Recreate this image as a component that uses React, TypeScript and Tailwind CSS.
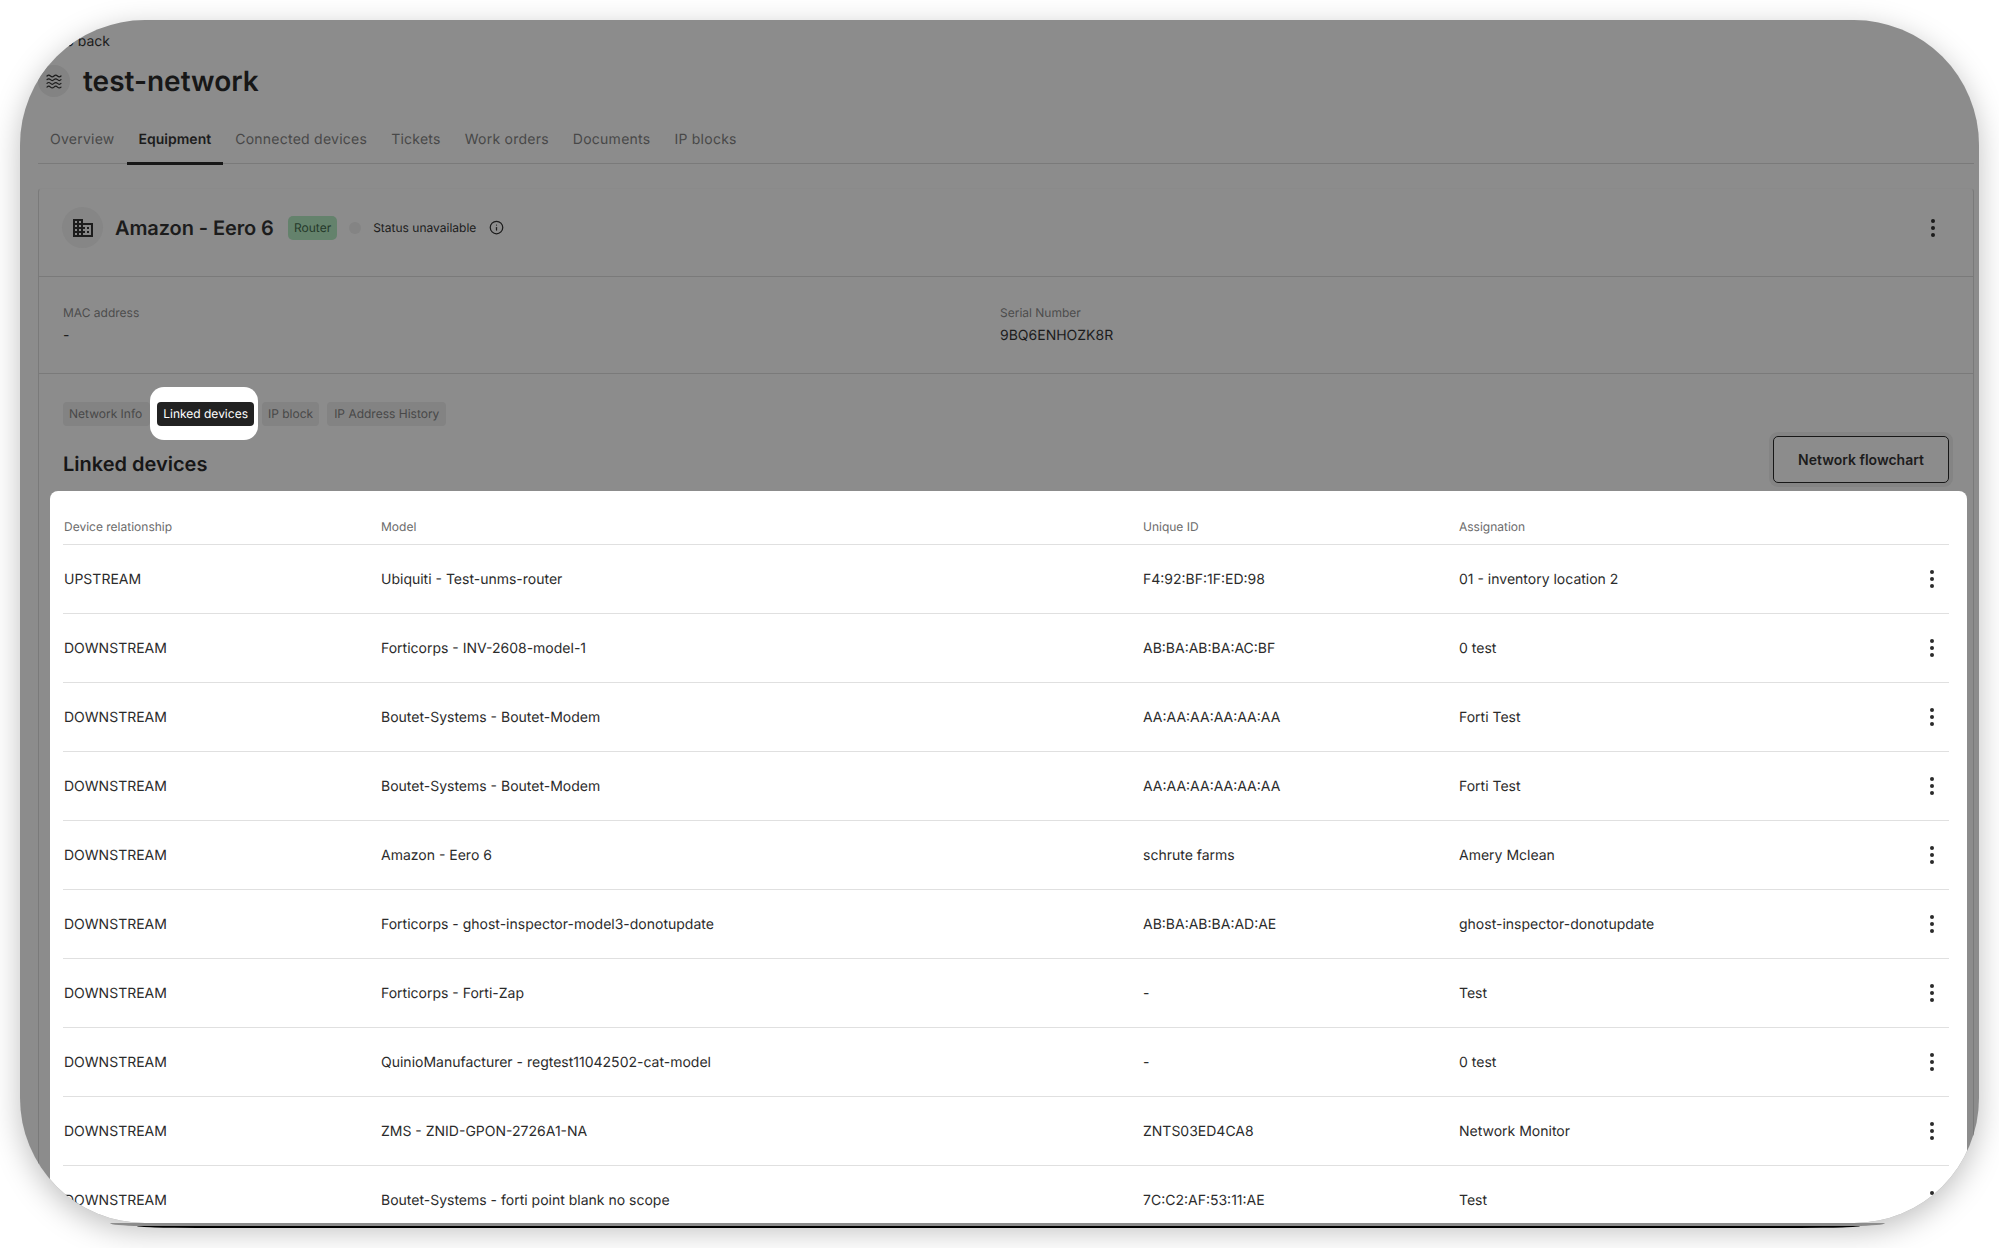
import { Info } from "lucide-react";
import { MdDomain } from "react-icons/md";

const rows = [
  ["UPSTREAM", "Ubiquiti - Test-unms-router", "F4:92:BF:1F:ED:98", "01 - inventory location 2"],
  ["DOWNSTREAM", "Forticorps - INV-2608-model-1", "AB:BA:AB:BA:AC:BF", "0 test"],
  ["DOWNSTREAM", "Boutet-Systems - Boutet-Modem", "AA:AA:AA:AA:AA:AA", "Forti Test"],
  ["DOWNSTREAM", "Boutet-Systems - Boutet-Modem", "AA:AA:AA:AA:AA:AA", "Forti Test"],
  ["DOWNSTREAM", "Amazon - Eero 6", "schrute farms", "Amery Mclean"],
  ["DOWNSTREAM", "Forticorps - ghost-inspector-model3-donotupdate", "AB:BA:AB:BA:AD:AE", "ghost-inspector-donotupdate"],
  ["DOWNSTREAM", "Forticorps - Forti-Zap", "-", "Test"],
  ["DOWNSTREAM", "QuinioManufacturer - regtest11042502-cat-model", "-", "0 test"],
  ["DOWNSTREAM", "ZMS - ZNID-GPON-2726A1-NA", "ZNTS03ED4CA8", "Network Monitor"],
  ["DOWNSTREAM", "Boutet-Systems - forti point blank no scope", "7C:C2:AF:53:11:AE", "Test"],
];

const tabs = ["Overview", "Equipment", "Connected devices", "Tickets", "Work orders", "Documents", "IP blocks"];

function Kebab({ className }: { className: string }) {
  return (
    <svg width="6" height="20" viewBox="0 0 6 20" className={className} fill="currentColor">
      <circle cx="3" cy="3" r="2" />
      <circle cx="3" cy="10" r="2" />
      <circle cx="3" cy="17" r="2" />
    </svg>
  );
}

function WavesIcon() {
  return (
    <svg width="16" height="15" viewBox="0 0 16 15" fill="none" stroke="currentColor" strokeWidth="1.2" strokeLinecap="round">
      <path d="M1 2c1.2-1.2 2.3-1.2 3.5 0s2.300 1.200 3.500 0 2.300-1.200 3.500 0 2.300 1.200 3.500 0" />
      <path d="M1 5.700c1.200-1.200 2.300-1.200 3.500 0s2.300 1.200 3.500 0 2.300-1.200 3.500 0 2.300 1.200 3.500 0" />
      <path d="M1 9.400c1.200-1.200 2.300-1.200 3.500 0s2.300 1.200 3.500 0 2.300-1.200 3.500 0 2.300 1.200 3.500 0" />
      <path d="M1 13.100c1.200-1.200 2.300-1.200 3.500 0s2.300 1.200 3.500 0 2.300-1.200 3.500 0 2.300 1.200 3.500 0" />
    </svg>
  );
}

export default function App() {
  return (
    <div className="h-[1248px] w-full overflow-hidden bg-white px-5 pt-5 font-['Inter',sans-serif] antialiased [text-rendering:geometricPrecision]">
      <div className="w-[1959px]">
        <div className="h-[1203px] overflow-hidden rounded-[125px] bg-[#8c8c8c] pl-[18px] pr-[5px] shadow-[0_8px_30px_rgba(0,0,0,0.25)]">
          <div className="pl-[17px] pt-3 text-sm leading-5 text-[#1c1c1c]">Go back</div>

          <div className="mt-[13px] flex items-center gap-[13px]">
            <div className="flex h-8 w-8 items-center justify-center rounded-full bg-[#838383] text-[#1c1c1c]">
              <WavesIcon />
            </div>
            <h1 className="text-[28px] font-semibold leading-8 text-[#171717]">test-network</h1>
          </div>

          <div className="mt-[22px] flex h-[45px] border-b border-[#7a7a7a]">
            {tabs.map((t) =>
              t === "Equipment" ? (
                <div
                  key={t}
                  className="flex h-[46px] items-center border-b-[3px] border-[#171717] px-3 pb-px text-sm font-semibold text-[#1c1c1c]"
                >
                  {t}
                </div>
              ) : (
                <div
                  key={t}
                  className="flex h-[46px] items-center border-b-[3px] border-transparent px-3 pb-px text-sm tracking-[0.25px] text-[#484848]"
                >
                  {t}
                </div>
              )
            )}
          </div>

          <div className="mt-6 rounded-t border-x border-t border-x-[#7a7a7a] border-t-[#8a8a8a]">
            <div className="flex h-[88px] items-start border-b border-[#7a7a7a] pl-[23px] pr-[37px] pt-[18px]">
              <div className="flex h-[41px] w-[41px] items-center justify-center rounded-full bg-[#868686] text-[#1c1c1c]">
                <MdDomain size={24} />
              </div>
              <div className="ml-3 mt-[6px] w-[160px] whitespace-nowrap text-xl font-semibold leading-[30px] tracking-[-0.1px] text-[#1c1c1c]">Amazon - Eero 6</div>
              <div className="ml-[13px] mt-[9px] flex h-6 items-center rounded-[5px] bg-[#64826c] px-[6px] text-xs text-[#24392a]">Router</div>
              <div className="ml-3 mt-[15px] h-3 w-3 rounded-full bg-[#848484]" />
              <div className="ml-3 mt-[13px] text-xs leading-4 text-[#1c1c1c]">Status unavailable</div>
              <Info size={15} strokeWidth={2} className="ml-[13px] mt-[13px] text-[#1c1c1c]" />
              <Kebab className="ml-auto mt-[11px] text-[#1c1c1c]" />
            </div>

            <div className="flex h-[97px] border-b border-[#7a7a7a] pl-6 pt-7">
              <div className="w-[937px]">
                <div className="text-xs leading-4 text-[#4d4d4d]">MAC address</div>
                <div className="mt-[5px] text-sm leading-5 text-[#1c1c1c]">-</div>
              </div>
              <div>
                <div className="text-xs leading-4 text-[#4d4d4d]">Serial Number</div>
                <div className="mt-[5px] text-sm leading-5 text-[#1c1c1c]">9BQ6ENHOZK8R</div>
              </div>
            </div>

            <div className="flex items-start pl-6 pt-7">
              <div className="flex h-6 items-center rounded bg-[#838383] pl-[6px] pr-2 text-xs text-[#484848]">Network Info</div>
              <div className="-mb-[14px] -mt-[15px] rounded-[14px] bg-white pb-[14px] pl-[7px] pr-1 pt-[15px]">
                <div className="flex h-6 items-center rounded bg-[#222222] px-[6px] text-xs text-white">Linked devices</div>
              </div>
              <div className="ml-1 flex h-6 items-center rounded bg-[#838383] px-[6px] text-xs text-[#484848]">IP block</div>
              <div className="ml-2 flex h-6 items-center rounded bg-[#838383] px-[7px] text-xs text-[#484848]">IP Address History</div>
            </div>

            <div className="mt-[10px] flex items-start justify-between pl-6 pr-6">
              <h2 className="mt-[14px] text-xl font-semibold leading-7 text-[#171717]">Linked devices</h2>
              <button className="flex h-[47px] w-[176px] items-center justify-center rounded-[5px] border border-[#171717] text-sm font-semibold text-[#1c1c1c] shadow-[0_0_0_4px_#848484]">
                Network flowchart
              </button>
            </div>

            <div className="ml-[11px] mr-[6px] mt-2 rounded-t-lg bg-white pl-[13px] pr-[18px]">
              <div className="flex h-[54px] border-b border-[#e0e0e0] pl-px pt-7 text-xs leading-4 text-[#6b6b6b]">
                <div className="w-[317px]">Device relationship</div>
                <div className="w-[762px]">Model</div>
                <div className="w-[316px]">Unique ID</div>
                <div>Assignation</div>
              </div>
              {rows.map((r, i) => (
                <div key={i} className="flex h-[69px] items-center border-b border-[#e0e0e0] pl-px pt-[2px] text-sm text-[#2b2b2b]">
                  <div className="w-[317px]">{r[0]}</div>
                  <div className="w-[762px]">{r[1]}</div>
                  <div className="w-[316px]">{r[2]}</div>
                  <div>{r[3]}</div>
                  <Kebab className="-mt-[2px] ml-auto mr-[14px] text-[#2b2b2b]" />
                </div>
              ))}
            </div>
          </div>
        </div>
        <div className="ml-[90px] h-[3px] w-[1775px] bg-[#8c8c8c] [border-radius:0_0_30px_30px/0_0_3px_3px]" />
        <div className="ml-[117px] h-[2px] w-[1723px] bg-black [border-radius:0_0_60px_60px/0_0_2px_2px]" />
      </div>
    </div>
  );
}
